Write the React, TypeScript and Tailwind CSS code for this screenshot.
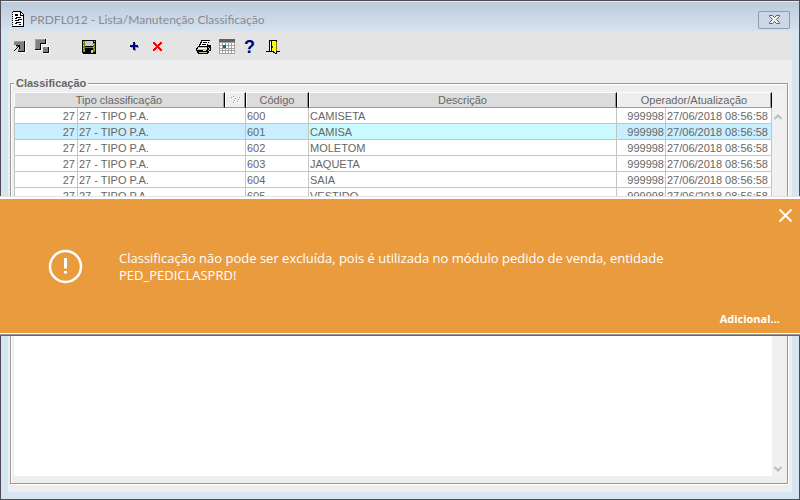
import { useState } from "react";
import type { ReactNode } from "react";

const rows = [
  { code: "600", name: "CAMISETA" },
  { code: "601", name: "CAMISA" },
  { code: "602", name: "MOLETOM" },
  { code: "603", name: "JAQUETA" },
  { code: "604", name: "SAIA" },
  { code: "605", name: "VESTIDO" },
];

const ToolButton = ({ label, children }: { label: string; children: ReactNode }) => (
  <button type="button" aria-label={label} className="flex w-[23px] justify-center pt-[7px]">
    {children}
  </button>
);

const Glyph = ({ children }: { children: ReactNode }) => (
  <svg width="17" height="17" viewBox="0 0 17 17" shapeRendering="crispEdges">
    {children}
  </svg>
);

const DocumentIcon = () => (
  <svg width="13" height="17" viewBox="0 0 13 17" shapeRendering="crispEdges">
    <path d="M1 1h8v1h1v1h1v1h1v12H1z" fill="#fff" />
    <path d="M0 1h1v1H0zM0 3h1v1H0zM0 5h1v1H0zM0 7h1v1H0zM0 9h1v1H0zM0 11h1v1H0zM0 13h1v1H0zM0 15h12v1H0zM1 0h8v1H1zM8 1h1v3h3v1H8zM9 1h1v1H9zM10 2h1v1h-1zM11 3h1v12h-1z" />
    <path d="M3 3h3v2H3zM4 6h5v1H4zM3 7h2v1H3zM6 8h4v1H6zM3 9h4v1H3zM4 11h5v1H4zM3 12h2v1H3zM7 13h2v1H7z" />
  </svg>
);

const TipIcon = () => (
  <Glyph>
    <path d="M3 3h12v12H7v-1H3z" fill="#fff" />
    <path d="M3 3h10v10H7v-2H6V9H5V7H3z" fill="#808080" />
    <path d="M3 3h10v1H3z" fill="#a0a0a0" />
    <path d="M3 7h2v2h3v2H7v3H3z" fill="#e4e4e4" />
    <path d="M13 3h1v11H7v-1h6z" />
    <path d="M5 7h4v4H8V9H7v1H6v1H5v1H4v1H3v-1h1v-1h1v-1h1V9h1V8H5z" />
  </Glyph>
);

const CascadeIcon = () => (
  <Glyph>
    <path d="M1 1h12v6H8v6H1zM9 8h7v8H9z" fill="#fff" />
    <path d="M1 1h10v4H6v6H1zM9 9h5v5H9z" fill="#808080" />
    <path d="M11 1h1v5H7v6H1v-1h5V5h5zM14 9h1v6H9v-1h5z" />
    <path d="M1 1h10v1H2v9H1z" fill="#a0a0a0" />
  </Glyph>
);

const SaveIcon = () => (
  <Glyph>
    <path d="M2 2h14v14H3v-1H2z" />
    <path d="M3 3h2v11H3zM13 5h2v9h-2zM5 9h8v1H5z" fill="#808000" />
    <path d="M3 4h1v1H3zM3 7h1v1H3zM3 10h1v1H3zM13 6h1v1h-1zM13 9h1v1h-1zM14 11h1v1h-1zM4 12h1v1H4z" fill="#d8d040" />
    <path d="M5 3h8v5H5zM14 3h1v1h-1zM11 12h2v3h-2z" fill="#c8c8c8" />
  </Glyph>
);

const AddIcon = () => (
  <Glyph>
    <path d="M8 5h2v3h3v2h-3v3H8v-3H5V8h3z" fill="#999" />
    <path d="M7 4h2v3h3v2H9v3H7V9H4V7h3z" fill="#000080" />
  </Glyph>
);

const DeleteIcon = () => (
  <Glyph>
    <path d="M4 4h2v1h1v1h1v1h1V6h1V5h1V4h2v2h-1v1h-1v1h-1v1h1v1h1v1h1v2h-2v-1h-1v-1H9v-1H8v1H7v1H6v1H4v-2h1v-1h1V9h1V8H6V7H5V6H4z" fill="#f00" />
  </Glyph>
);

const PrintIcon = () => (
  <Glyph>
    <path d="M6 2h9v1h-1v2h-1v2h3v6h-2v2h-1v1H3v-1H2v-2H1v-3h1V9h1V8h1V6h1V4h1z" />
    <path d="M7 3h7v1h-1v2h-1v2H5V7h1V5h1zM3 10h9v1H3z" fill="#fff" />
    <path d="M8 4h4v1H8zM7 6h4v1H7z" />
    <path d="M3 9h9v1H3zM2 11h10v1H2zM4 14h8v1H4zM13 9h1v1h-1zM14 10h1v2h-1zM13 12h1v1h-1z" fill="#bbb" />
    <path d="M8 12h3v1H8z" fill="#ffff00" />
  </Glyph>
);

const CalendarIcon = () => (
  <Glyph>
    <path d="M1 1h16v15H1z" fill="#a2a2a2" />
    <path d="M1 1h16v3H1z" fill="#606060" />
    <path d="M2 5h2v2H2zM5 5h2v2H5zM8 5h2v2H8zM11 5h2v2h-2zM14 5h2v2h-2zM2 8h2v2H2zM8 8h2v2H8zM11 8h2v2h-2zM14 8h2v2h-2zM2 11h2v1H2zM5 11h2v1H5zM8 11h2v1H8zM11 11h2v1h-2zM14 11h2v1h-2zM2 13h2v2H2zM5 13h2v2H5zM8 13h2v2H8zM11 13h2v2h-2zM14 13h2v2h-2z" fill="#fff" />
    <path d="M5 7h3v3H5z" fill="#08699c" />
  </Glyph>
);

const ExitIcon = () => (
  <Glyph>
    <path d="M5 2h8v11h3v1h-3v2h-2v-1H9v-1H2v-1h3z" />
    <path d="M6 3h1v10H6z" fill="#fff" />
    <path d="M8 3h4v12h-1v-1h-1v-1H8z" fill="#ffff00" />
    <path d="M12 4h1v9h-1z" fill="#808000" />
    <path d="M8 8h1v2H8z" fill="#444" />
  </Glyph>
);

const ScrollArrow = ({ down = false }) => (
  <svg width="8" height="6" viewBox="0 0 8 6" fill="none" stroke="#bcbcbc" strokeWidth="2">
    <path d={down ? "M.5 1 4 4.5 7.5 1" : "M.5 5 4 1.5 7.5 5"} />
  </svg>
);

const headCell =
  "h-4 p-0 font-normal border-t border-r border-b border-t-white border-r-black border-b-[#999] shadow-[inset_1px_0_0_#fff,inset_-1px_0_0_#999]";
const cell = "h-4 p-0 pt-px border-r border-b border-[#c4c4c4] whitespace-nowrap overflow-hidden";

const ClassificationTable = () => {
  const [selected, setSelected] = useState("601");
  return (
    <table className="w-full table-fixed border-separate border-spacing-0 text-[11px] leading-[14px] text-[#666]">
      <colgroup>
        <col className="w-[64px]" />
        <col className="w-[147px]" />
        <col className="w-[21px]" />
        <col className="w-[63px]" />
        <col />
        <col className="w-[49px]" />
        <col className="w-[106px]" />
      </colgroup>
      <thead>
        <tr className="bg-[#dcdcdc]">
          <th colSpan={2} className={headCell}>Tipo classificação</th>
          <th className={`${headCell} bg-[#eee]`} aria-label="Filtro">
            <svg className="mx-auto" width="11" height="10" viewBox="0 0 11 10" shapeRendering="crispEdges">
              <path d="M1 2h1v1H1zM3 1h1v1H3zM5 3h1v1H5zM9 2h1v1H9zM8 4h1v1H8zM7 6h1v1H7zM4 5h1v1H4zM3 7h1v1H3z" fill="#999" />
              <path d="M2 3h1v1H2zM4 2h1v1H4zM10 3h1v1h-1zM9 5h1v1H9zM8 7h1v1H8zM5 6h1v1H5zM4 8h1v1H4z" fill="#fff" />
            </svg>
          </th>
          <th className={headCell}>Código</th>
          <th className={headCell}>Descrição</th>
          <th colSpan={2} className={`${headCell} bg-[#eee]`}>Operador/Atualização</th>
        </tr>
      </thead>
      <tbody>
        {rows.map((row) => (
          <tr
            key={row.code}
            onClick={() => setSelected(row.code)}
            className={row.code === selected ? "bg-[#c8eeff]" : "bg-white"}
          >
            <td className={`${cell} border-l pr-[2px] text-right`}>27</td>
            <td colSpan={2} className={`${cell} pl-px`}>27 - TIPO P.A.</td>
            <td className={`${cell} pl-px`}>{row.code}</td>
            <td className={row.code === selected ? `${cell} bg-[#c8faff] pl-px` : `${cell} pl-px`}>
              {row.name}
            </td>
            <td className={`${cell} pr-px text-right`}>999998</td>
            <td className={`${cell} pl-px`}>27/06/2018 08:56:58</td>
          </tr>
        ))}
      </tbody>
    </table>
  );
};

const Notice = ({ onClose }: { onClose: () => void }) => (
  <div
    role="alert"
    className="absolute -inset-x-px top-[195px] border-t border-b border-t-[#e2e2e2] border-b-[#666] text-white"
  >
    <div className="border-t-2 border-b border-t-white border-b-[#999]">
      <div className="flex flex-col border-b border-white bg-[#ea9b3e] pt-[7px] pr-[5px] pb-[6px]">
        <button type="button" aria-label="Fechar" className="self-end p-[2px]" onClick={onClose}>
          <svg width="15" height="15" viewBox="0 0 15 15" stroke="#fff" strokeWidth="2">
            <path d="M1.5 1.5 13.5 13.5M13.5 1.5 1.5 13.5" />
          </svg>
        </button>
        <div className="flex items-start pt-[24px] pr-[110px] pl-[48px]">
          <svg className="shrink-0" width="35" height="35" viewBox="0 0 35 35" fill="none" stroke="#fff">
            <circle cx="17.5" cy="17.5" r="15.5" strokeWidth="2.5" />
            <path d="M17.5 9v10.5M17.5 22v2.5" strokeWidth="3" />
          </svg>
          <p className="pt-px pl-[36px] text-[13px] leading-[17px]">
            Classificação não pode ser excluída, pois é utilizada no módulo pedido de venda, entidade
            PED_PEDICLASPRD!
          </p>
        </div>
        <a href="#adicional" className="mt-[27px] mr-[15px] self-end text-[11px] leading-4 font-bold">
          Adicional...
        </a>
      </div>
    </div>
  </div>
);

export default function App() {
  const [noticeOpen, setNoticeOpen] = useState(true);
  return (
    <div className="bg-[#4f4b52] font-['Open_Sans','Noto_Sans',sans-serif]">
      <div className="relative flex min-h-screen flex-col rounded-t-[6px] border border-[#4f4b52] bg-[#d7e4f2]">
        <header className="flex h-[30px] items-center border-t border-[#e4edf6] bg-linear-to-b from-[#bccbdb] to-[#d5e2f0] pt-[6px] pr-[9px] pl-[11px]">
          <DocumentIcon />
          <h1 className="grow pl-[5px] font-['Lato','Open_Sans',sans-serif] text-[12px] leading-4 text-[#888c92]">
            PRDFL012 - Lista/Manutenção Classificação
          </h1>
          <button
            type="button"
            aria-label="Fechar janela"
            className="flex h-[18px] w-8 items-center justify-center rounded-[2px] border border-[#8f9dac] bg-[#c9d7e6]"
          >
            <svg width="13" height="11" viewBox="0 0 13 11">
              <path d="M1.5 1.5h3l2 2 2-2h3v1l-3 3 3 3v1h-3l-2-2-2 2h-3v-1l3-3-3-3z" fill="#eee" stroke="#575f75" />
            </svg>
          </button>
        </header>
        <main className="mx-[7px] mb-[7px] flex grow flex-col bg-[#eee] font-['Liberation_Sans',Arial,sans-serif]">
          <nav className="flex h-[29px] items-start gap-[23px] bg-[#e4e4e4]">
            <div className="flex">
              <ToolButton label="Restaurar"><TipIcon /></ToolButton>
              <ToolButton label="Cascata"><CascadeIcon /></ToolButton>
            </div>
            <ToolButton label="Salvar"><SaveIcon /></ToolButton>
            <div className="flex">
              <ToolButton label="Incluir"><AddIcon /></ToolButton>
              <ToolButton label="Excluir"><DeleteIcon /></ToolButton>
            </div>
            <div className="flex">
              <ToolButton label="Imprimir"><PrintIcon /></ToolButton>
              <ToolButton label="Calendário"><CalendarIcon /></ToolButton>
              <ToolButton label="Ajuda">
                <span className="text-[18px] leading-[18px] font-bold text-[#000080]">?</span>
              </ToolButton>
              <ToolButton label="Sair"><ExitIcon /></ToolButton>
            </div>
          </nav>
          <section
            aria-labelledby="group-title"
            className="mt-[23px] mr-1 mb-2 ml-[2px] flex grow flex-col border border-[#999] px-[3px] pb-[7px] shadow-[1px_1px_0_#fff,inset_1px_1px_0_#fff]"
          >
            <h2
              id="group-title"
              className="-mt-[7px] self-start bg-[#eee] px-[2px] text-[11px] leading-[13px] font-bold text-[#666]"
            >
              Classificação
            </h2>
            <div className="mt-[2px] flex grow">
              <div className="min-w-0 grow bg-white">
                <ClassificationTable />
              </div>
              <div className="flex w-3 shrink-0 flex-col items-center justify-between bg-[#f0f0f0] pt-[22px] pb-1">
                <ScrollArrow />
                <ScrollArrow down />
              </div>
            </div>
          </section>
        </main>
        {noticeOpen && <Notice onClose={() => setNoticeOpen(false)} />}
      </div>
    </div>
  );
}
